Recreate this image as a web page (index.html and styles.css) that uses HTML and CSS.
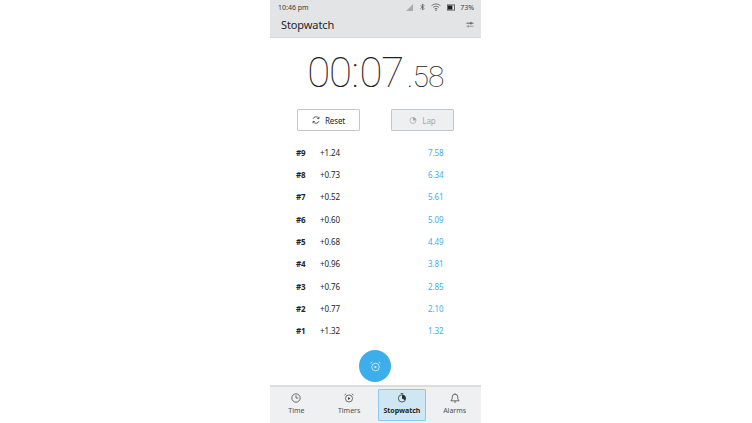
FILE: index.html
```html
<!DOCTYPE html>
<html lang="en">
<head>
    <meta charset="UTF-8">
    <title>Stopwatch</title>
    <link rel="stylesheet" href="styles.css">
</head>
<body>
    <div class="phone">
        <div class="top">
            <div class="status">
                <span>10:46 pm</span>
                <div class="status-icons">
                    <svg width="8" height="7" viewBox="0 0 9 8"><path d="M0 8 L8 0 V8 Z" fill="#a9abad"/></svg>
                    <svg width="5" height="8" viewBox="0 0 6 9"><path d="M0.5 2.5 L5 6.2 L3 8.2 V0.8 L5 2.8 L0.5 6.5" fill="none" stroke="#4d4f51" stroke-width="0.8"/></svg>
                    <svg width="10" height="8" viewBox="0 0 11 9" fill="none" stroke="#4d4f51" stroke-width="0.8"><path d="M0.5 3 Q5.5 -1 10.5 3"/><path d="M2.2 4.8 Q5.5 2 8.8 4.8"/><path d="M4 6.5 Q5.5 5.4 7 6.5"/><circle cx="5.5" cy="8" r="0.5"/></svg>
                    <svg width="8" height="7" viewBox="0 0 8 7"><rect x="0.4" y="0.9" width="7.2" height="5.2" fill="none" stroke="#4d4f51" stroke-width="0.8"/><rect x="1" y="1.5" width="4.4" height="4" fill="#1f2021"/></svg>
                    <span class="pct">73%</span>
                </div>
            </div>
            <div class="title-bar">
                <span class="title">Stopwatch</span>
                <svg width="8" height="7" viewBox="0 0 9 8" fill="none" stroke="#3a3c3e" stroke-width="0.9"><path d="M0.5 2.5 H8.5"/><path d="M5.5 1 V4"/><path d="M0.5 6 H8.5" stroke="#8a8c8e"/><path d="M2.5 4.5 V7.5" stroke="#8a8c8e"/></svg>
            </div>
        </div>

        <div class="clock">00<span class="colon">:</span>07<small>.58</small></div>

        <div class="actions">
            <button class="btn">
                <svg width="8" height="8" viewBox="0 0 9 9" fill="none" stroke="#3a3c3e" stroke-width="0.9"><path d="M1 3.2 A3.7 3.7 0 0 1 7.6 2.6"/><path d="M8 5.8 A3.7 3.7 0 0 1 1.4 6.4"/><path d="M7.9 0.8 V2.9 H5.8"/><path d="M1.1 8.2 V6.1 H3.2"/></svg>
                Reset
            </button>
            <button class="btn disabled">
                <svg width="8" height="8" viewBox="0 0 9 9"><circle cx="4.5" cy="5" r="3.4" fill="none" stroke="#a5a7a8" stroke-width="0.8"/><path d="M4.5 5 V1.6 A3.4 3.4 0 0 1 7.9 5 Z" fill="#a5a7a8"/></svg>
                Lap
            </button>
        </div>

        <div class="laps">
            <div class="lap"><b>#9</b><span class="diff">+1.24</span><span class="total">7.58</span></div>
            <div class="lap"><b>#8</b><span class="diff">+0.73</span><span class="total">6.34</span></div>
            <div class="lap"><b>#7</b><span class="diff">+0.52</span><span class="total">5.61</span></div>
            <div class="lap"><b>#6</b><span class="diff">+0.60</span><span class="total">5.09</span></div>
            <div class="lap"><b>#5</b><span class="diff">+0.68</span><span class="total">4.49</span></div>
            <div class="lap"><b>#4</b><span class="diff">+0.96</span><span class="total">3.81</span></div>
            <div class="lap"><b>#3</b><span class="diff">+0.76</span><span class="total">2.85</span></div>
            <div class="lap"><b>#2</b><span class="diff">+0.77</span><span class="total">2.10</span></div>
            <div class="lap"><b>#1</b><span class="diff">+1.32</span><span class="total">1.32</span></div>
        </div>

        <div class="fab-row">
            <div class="fab">
                <svg width="11" height="11" viewBox="0 0 11 11" fill="none" stroke="#fff" stroke-width="0.8" opacity="0.85"><circle cx="5.5" cy="6" r="3.8"/><path d="M0.6 2.4 L2.4 0.8"/><path d="M10.4 2.4 L8.6 0.8"/><path d="M4.5 4.4 L7 6 L4.5 7.6 Z" fill="#fff" stroke="none"/></svg>
            </div>
        </div>

        <div class="tabs">
            <div class="tab">
                <svg width="10" height="10" viewBox="0 0 11 11" fill="none" stroke="#3a3c3e" stroke-width="0.8"><circle cx="5.5" cy="5.5" r="4.6"/><path d="M5.5 2.5 V5.5 H8"/></svg>
                <span>Time</span>
            </div>
            <div class="tab">
                <svg width="10" height="10" viewBox="0 0 11 11" fill="none" stroke="#3a3c3e" stroke-width="0.8"><circle cx="5.5" cy="6" r="3.9"/><path d="M0.6 2.4 L2.4 0.8"/><path d="M10.4 2.4 L8.6 0.8"/><path d="M4.5 4.4 L7 6 L4.5 7.6 Z" fill="#3a3c3e" stroke="none"/></svg>
                <span>Timers</span>
            </div>
            <div class="tab active">
                <svg width="10" height="10" viewBox="0 0 11 11"><circle cx="5.5" cy="6" r="4" fill="none" stroke="#2a2c2e" stroke-width="0.8"/><path d="M5.5 6 V2 A4 4 0 0 1 9 8 Z" fill="#2a2c2e"/><path d="M4 0.6 H7" stroke="#2a2c2e" stroke-width="0.8"/></svg>
                <span>Stopwatch</span>
            </div>
            <div class="tab">
                <svg width="10" height="10" viewBox="0 0 11 11" fill="none" stroke="#3a3c3e" stroke-width="0.8"><path d="M1 8.6 H10 L8.6 6.6 V4.4 A3.1 3.1 0 0 0 2.4 4.4 V6.6 Z"/><path d="M5.5 0.4 V1.3"/><path d="M4.4 9.6 Q5.5 11 6.6 9.6"/></svg>
                <span>Alarms</span>
            </div>
        </div>
    </div>
</body>
</html>
```

FILE: styles.css
```css
* {
    margin: 0;
    padding: 0;
    box-sizing: border-box;
    font-family: 'Noto Sans', 'Open Sans', sans-serif;
}

body {
    background: white;
    display: flex;
    justify-content: center;
    height: 423px;
    overflow: hidden;
}

.phone {
    width: 211px;
    height: 423px;
    margin-right: 1px;
    display: flex;
    flex-direction: column;
    background: white;
    color: #232629;
}

.top {
    height: 38px;
    background: #e3e4e5;
    border-bottom: 1px solid #d6d7d8;
    padding: 0 7px 0 8px;
    flex-shrink: 0;
}

.status {
    height: 14px;
    display: flex;
    justify-content: space-between;
    align-items: center;
    font-size: 7px;
    color: #3a3c3e;
}

.status-icons {
    display: flex;
    align-items: center;
    gap: 6px;
}

.pct {
    margin-left: -1px;
}

.title-bar {
    height: 22px;
    padding: 0 0 2px 3px;
    display: flex;
    justify-content: space-between;
    align-items: center;
}

.title {
    font-size: 11px;
    letter-spacing: -0.1px;
}

.clock {
    margin-top: 11px;
    height: 48px;
    text-align: center;
    font-family: 'Roboto', sans-serif;
    font-weight: 100;
    font-size: 42px;
    letter-spacing: -1.4px;
    line-height: 48px;
    color: #1f2225;
}

.colon {
    font-family: 'Roboto', sans-serif;
    margin: 0 2px 0 1px;
}

.clock small {
    font-family: 'Roboto', sans-serif;
    font-weight: 100;
    font-size: 30px;
    letter-spacing: -0.8px;
    margin-left: 4px;
}

.actions {
    display: flex;
    justify-content: space-between;
    padding: 0 27px;
    margin-top: 12px;
}

.btn {
    width: 63px;
    height: 22px;
    border: 1px solid #c4c6c7;
    border-radius: 1px;
    background: white;
    color: #232629;
    font-size: 8px;
    letter-spacing: -0.1px;
    display: flex;
    align-items: center;
    justify-content: center;
    gap: 5px;
}

.btn.disabled {
    background: #eeeff0;
    color: #a5a7a8;
}

.laps {
    margin-top: 10px;
    flex: 1;
}

.lap {
    height: 22.35px;
    display: flex;
    align-items: center;
    font-size: 8px;
    letter-spacing: -0.1px;
}

.lap b {
    width: 24px;
    margin-left: 26px;
    font-weight: 700;
}

.diff {
    width: 108px;
}

.total {
    color: #3daee9;
}

.fab-row {
    height: 31px;
    display: flex;
    justify-content: center;
    margin-bottom: 4px;
    flex-shrink: 0;
}

.fab {
    width: 32px;
    height: 32px;
    margin-right: 1px;
    border-radius: 50%;
    background: #3daee9;
    display: flex;
    align-items: center;
    justify-content: center;
}

.tabs {
    height: 38px;
    flex-shrink: 0;
    background: #eff0f1;
    border-top: 2px solid #dcddde;
    display: flex;
    padding: 2px 0;
}

.tab {
    flex: 1;
    margin: 0 2.4px;
    display: flex;
    flex-direction: column;
    align-items: center;
    gap: 3px;
    padding-top: 3px;
    font-size: 7px;
    color: #4d4f51;
    border: 1px solid transparent;
}

.tab.active {
    background: #cfe6f3;
    border-color: #8cc9ec;
    border-radius: 1px;
    font-weight: 700;
    color: #232629;
}
```
